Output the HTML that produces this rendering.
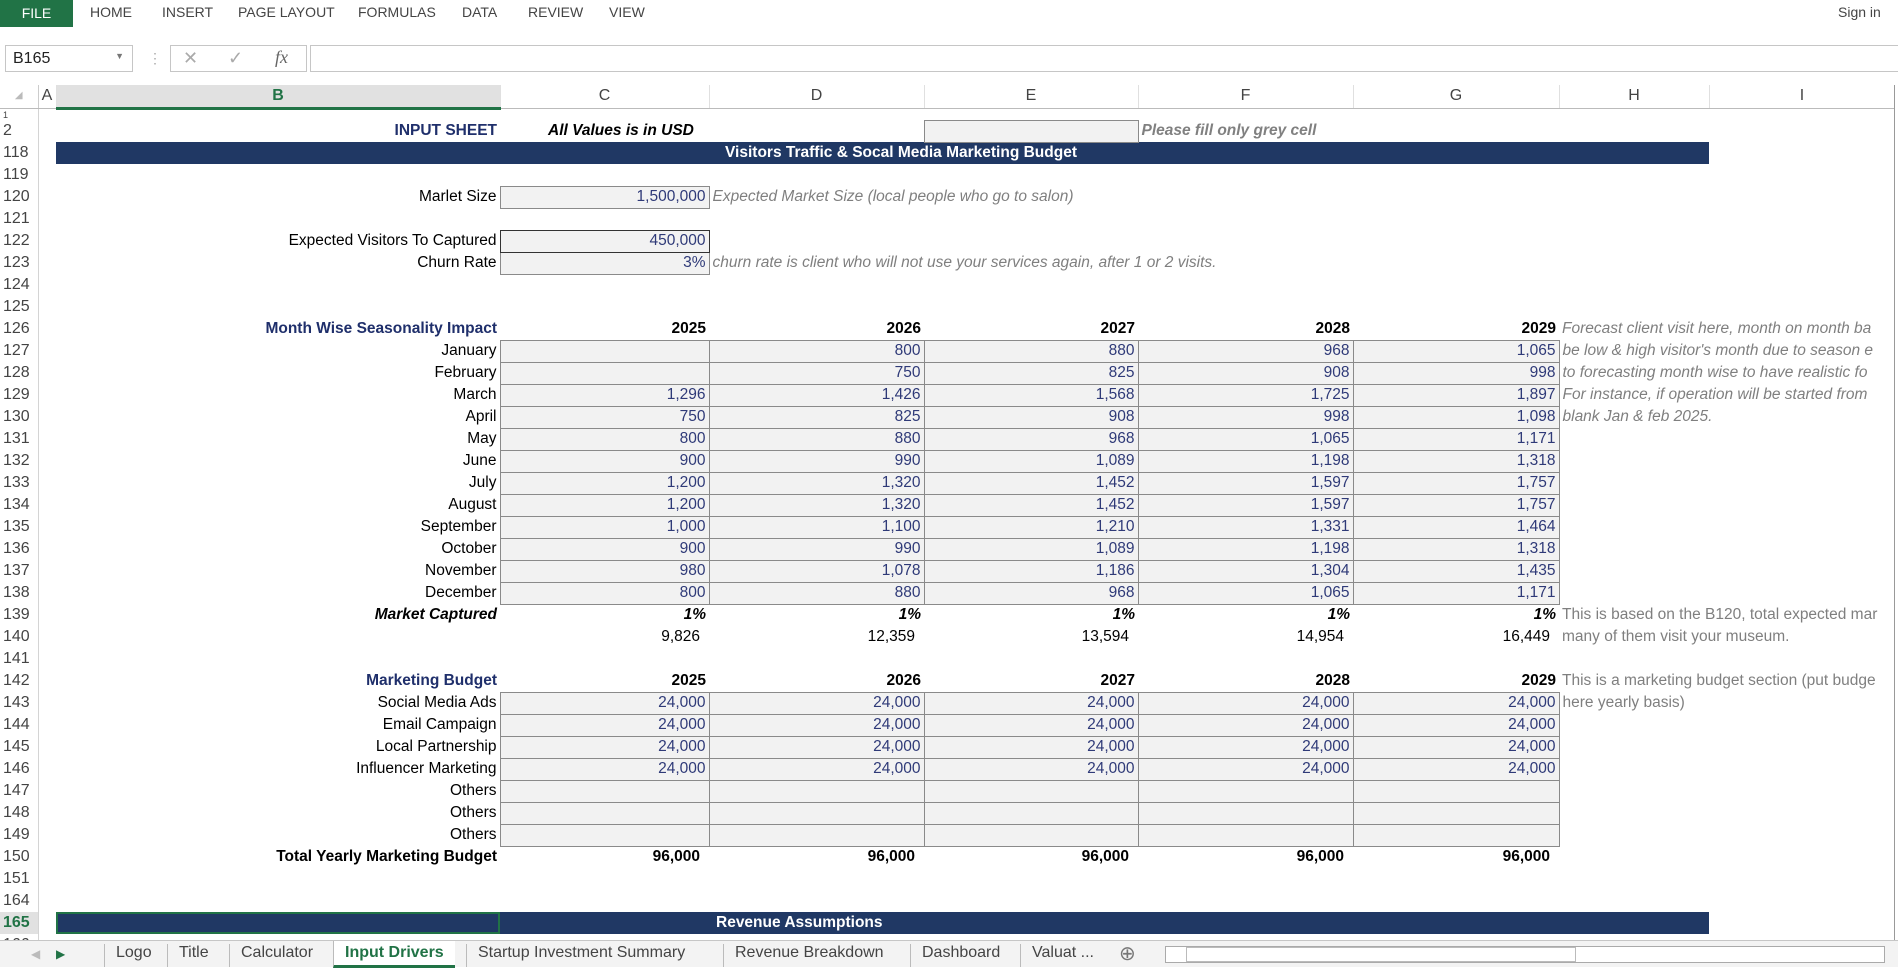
<!DOCTYPE html>
<html><head><meta charset="utf-8"><style>
*{margin:0;padding:0;box-sizing:border-box}
body{width:1898px;height:967px;overflow:hidden;background:#fff;font-family:"Liberation Sans Narrow","Liberation Sans",sans-serif;position:relative}
.menu{position:absolute;top:0;left:0;width:1898px;height:29px;font-family:"Liberation Sans",sans-serif;font-size:14px;color:#444}
.menu span{position:absolute;top:4px}
.file{position:absolute;left:0;top:0;width:73px;height:27px;background:#217346;color:#fff;text-align:center;line-height:26px;font-size:14px}
.nb{position:absolute;left:5px;top:45px;width:128px;height:27px;border:1px solid #c6c6c6;font:16px "Liberation Sans",sans-serif;padding:4px 0 0 7px;color:#222}
.fxb{position:absolute;left:170px;top:45px;width:137px;height:27px;border:1px solid #c6c6c6;color:#aaa;font-size:18px}
.fin{position:absolute;left:310px;top:45px;width:1590px;height:27px;border:1px solid #c6c6c6;border-right:none}
.grid{position:absolute;left:0;top:85px;width:1895px;height:855px;overflow:hidden;border-right:1px solid #999}
table{border-collapse:collapse;table-layout:fixed;width:1895px}
tr{height:22px}
td{height:22px;padding:0 3px;white-space:nowrap;font-size:15.5px;color:#000;overflow:visible;line-height:20px}
.rh{font-family:"Liberation Sans",sans-serif;font-size:16px;color:#444;padding:0 0 0 3px;border-right:1px solid #d4d4d4}
.ch td{height:23px;text-align:center;font-family:"Liberation Sans",sans-serif;font-size:16px;color:#444;border-right:1px solid #e0e0e0;border-bottom:1px solid #bbb}
.r{text-align:right}
.g{background:#f2f2f2;border:1px solid #8a8a8a;text-align:right;color:#2f3a78}
.b{font-weight:bold}
.nv{color:#1f2f6b;font-weight:bold;text-align:right}
.nt{color:#7f7f7f;font-style:italic}
.band{background:#203864;color:#fff;font-weight:bold;text-align:center}
.tabs{position:absolute;left:0;top:940px;width:1898px;height:27px;background:#f3f3f3;border-top:1px solid #c6c6c6;font-family:"Liberation Sans",sans-serif;font-size:16px;color:#444}
.tabs span{position:absolute;top:3px;padding:0 11px;border-left:1px solid #bbb;height:23px}
</style></head><body>
<div class="menu"><div class="file">FILE</div>
<span style="left:90px">HOME</span><span style="left:162px">INSERT</span><span style="left:238px">PAGE LAYOUT</span><span style="left:358px">FORMULAS</span><span style="left:462px">DATA</span><span style="left:528px">REVIEW</span><span style="left:609px">VIEW</span><span style="left:1838px">Sign in</span></div>
<div class="nb">B165<span style="position:absolute;right:8px;top:5px;font-size:9px;color:#777">▼</span></div>
<div style="position:absolute;left:148px;top:50px;color:#aaa;font-size:14px">⋮</div>
<div class="fxb"><span style="position:absolute;left:12px;top:2px">✕</span><span style="position:absolute;left:57px;top:2px">✓</span><span style="position:absolute;left:104px;top:1px;font-family:'Liberation Serif',serif;font-style:italic;color:#666">fx</span></div>
<div class="fin"></div>
<div class="grid"><table>
<colgroup><col style="width:38px"><col style="width:18px"><col style="width:444px"><col style="width:209px"><col style="width:215px"><col style="width:214px"><col style="width:215px"><col style="width:206px"><col style="width:150px"><col style="width:186px"></colgroup>
<tr class="ch" style="height:23px"><td style="border-right:1px solid #ccc;font-size:10px;color:#bbb">◢</td><td>A</td><td style="background:#e1e1e1;color:#217346;font-weight:bold;border-bottom:3px solid #217346">B</td><td>C</td><td>D</td><td>E</td><td>F</td><td>G</td><td>H</td><td>I</td></tr>
<tr style="height:12px"><td class="rh" style="height:12px;font-size:9px;line-height:9px;vertical-align:bottom">1</td><td colspan="9" style="height:12px;line-height:9px"></td></tr>
<tr><td class="rh">2</td><td></td><td class="nv">INPUT SHEET</td><td class="b" style="font-style:italic;padding-left:48px">All Values is in USD</td><td></td><td class="g"></td><td class="b nt" style="color:#808080">Please fill only grey cell</td><td></td><td></td><td></td></tr>
<tr><td class="rh">118</td><td></td><td colspan="7" class="band" style="padding-left:40px">Visitors Traffic &amp; Socal Media Marketing Budget</td><td></td></tr>
<tr><td class="rh">119</td><td colspan="9"></td></tr>
<tr><td class="rh">120</td><td></td><td class="r">Marlet Size</td><td class="g">1,500,000</td><td class="nt">Expected Market Size (local people who go to salon)</td><td></td><td></td><td></td><td></td><td></td></tr>
<tr><td class="rh">121</td><td colspan="9"></td></tr>
<tr><td class="rh">122</td><td></td><td class="r">Expected Visitors To Captured</td><td class="g" style="border-color:#333">450,000</td><td></td><td></td><td></td><td></td><td></td><td></td></tr>
<tr><td class="rh">123</td><td></td><td class="r">Churn Rate</td><td class="g">3%</td><td class="nt">churn rate is client who will not use your services again, after 1 or 2 visits.</td><td></td><td></td><td></td><td></td><td></td></tr>
<tr><td class="rh">124</td><td colspan="9"></td></tr>
<tr><td class="rh">125</td><td colspan="9"></td></tr>
<tr><td class="rh">126</td><td></td><td class="nv">Month Wise Seasonality Impact</td><td class="r b">2025</td><td class="r b">2026</td><td class="r b">2027</td><td class="r b">2028</td><td class="r b">2029</td><td class="nt">Forecast client visit here, month on month ba</td><td></td></tr>
<tr><td class="rh">127</td><td></td><td class="r">January</td><td class="g"></td><td class="g">800</td><td class="g">880</td><td class="g">968</td><td class="g">1,065</td><td class="nt">be low &amp; high visitor's month due to season e</td><td></td></tr>
<tr><td class="rh">128</td><td></td><td class="r">February</td><td class="g"></td><td class="g">750</td><td class="g">825</td><td class="g">908</td><td class="g">998</td><td class="nt">to forecasting month wise to have realistic fo</td><td></td></tr>
<tr><td class="rh">129</td><td></td><td class="r">March</td><td class="g">1,296</td><td class="g">1,426</td><td class="g">1,568</td><td class="g">1,725</td><td class="g">1,897</td><td class="nt">For instance, if operation will be started from</td><td></td></tr>
<tr><td class="rh">130</td><td></td><td class="r">April</td><td class="g">750</td><td class="g">825</td><td class="g">908</td><td class="g">998</td><td class="g">1,098</td><td class="nt">blank Jan &amp; feb 2025.</td><td></td></tr>
<tr><td class="rh">131</td><td></td><td class="r">May</td><td class="g">800</td><td class="g">880</td><td class="g">968</td><td class="g">1,065</td><td class="g">1,171</td><td></td><td></td></tr>
<tr><td class="rh">132</td><td></td><td class="r">June</td><td class="g">900</td><td class="g">990</td><td class="g">1,089</td><td class="g">1,198</td><td class="g">1,318</td><td></td><td></td></tr>
<tr><td class="rh">133</td><td></td><td class="r">July</td><td class="g">1,200</td><td class="g">1,320</td><td class="g">1,452</td><td class="g">1,597</td><td class="g">1,757</td><td></td><td></td></tr>
<tr><td class="rh">134</td><td></td><td class="r">August</td><td class="g">1,200</td><td class="g">1,320</td><td class="g">1,452</td><td class="g">1,597</td><td class="g">1,757</td><td></td><td></td></tr>
<tr><td class="rh">135</td><td></td><td class="r">September</td><td class="g">1,000</td><td class="g">1,100</td><td class="g">1,210</td><td class="g">1,331</td><td class="g">1,464</td><td></td><td></td></tr>
<tr><td class="rh">136</td><td></td><td class="r">October</td><td class="g">900</td><td class="g">990</td><td class="g">1,089</td><td class="g">1,198</td><td class="g">1,318</td><td></td><td></td></tr>
<tr><td class="rh">137</td><td></td><td class="r">November</td><td class="g">980</td><td class="g">1,078</td><td class="g">1,186</td><td class="g">1,304</td><td class="g">1,435</td><td></td><td></td></tr>
<tr><td class="rh">138</td><td></td><td class="r">December</td><td class="g">800</td><td class="g">880</td><td class="g">968</td><td class="g">1,065</td><td class="g">1,171</td><td></td><td></td></tr>
<tr><td class="rh">139</td><td></td><td class="r b" style="font-style:italic">Market Captured</td><td class="r b" style="font-style:italic">1%</td><td class="r b" style="font-style:italic">1%</td><td class="r b" style="font-style:italic">1%</td><td class="r b" style="font-style:italic">1%</td><td class="r b" style="font-style:italic">1%</td><td class="nt" style="font-style:normal">This is based on the B120, total expected mar</td><td></td></tr>
<tr><td class="rh">140</td><td></td><td></td><td class="r" style="padding-right:9px">9,826</td><td class="r" style="padding-right:9px">12,359</td><td class="r" style="padding-right:9px">13,594</td><td class="r" style="padding-right:9px">14,954</td><td class="r" style="padding-right:9px">16,449</td><td class="nt" style="font-style:normal">many of them visit your museum.</td><td></td></tr>
<tr><td class="rh">141</td><td colspan="9"></td></tr>
<tr><td class="rh">142</td><td></td><td class="nv">Marketing Budget</td><td class="r b">2025</td><td class="r b">2026</td><td class="r b">2027</td><td class="r b">2028</td><td class="r b">2029</td><td class="nt" style="font-style:normal">This is a marketing budget section (put budge</td><td></td></tr>
<tr><td class="rh">143</td><td></td><td class="r">Social Media Ads</td><td class="g">24,000</td><td class="g">24,000</td><td class="g">24,000</td><td class="g">24,000</td><td class="g">24,000</td><td class="nt" style="font-style:normal">here yearly basis)</td><td></td></tr>
<tr><td class="rh">144</td><td></td><td class="r">Email Campaign</td><td class="g">24,000</td><td class="g">24,000</td><td class="g">24,000</td><td class="g">24,000</td><td class="g">24,000</td><td></td><td></td></tr>
<tr><td class="rh">145</td><td></td><td class="r">Local Partnership</td><td class="g">24,000</td><td class="g">24,000</td><td class="g">24,000</td><td class="g">24,000</td><td class="g">24,000</td><td></td><td></td></tr>
<tr><td class="rh">146</td><td></td><td class="r">Influencer Marketing</td><td class="g">24,000</td><td class="g">24,000</td><td class="g">24,000</td><td class="g">24,000</td><td class="g">24,000</td><td></td><td></td></tr>
<tr><td class="rh">147</td><td></td><td class="r">Others</td><td class="g"></td><td class="g"></td><td class="g"></td><td class="g"></td><td class="g"></td><td></td><td></td></tr>
<tr><td class="rh">148</td><td></td><td class="r">Others</td><td class="g"></td><td class="g"></td><td class="g"></td><td class="g"></td><td class="g"></td><td></td><td></td></tr>
<tr><td class="rh">149</td><td></td><td class="r">Others</td><td class="g"></td><td class="g"></td><td class="g"></td><td class="g"></td><td class="g"></td><td></td><td></td></tr>
<tr><td class="rh">150</td><td></td><td class="r b">Total Yearly Marketing Budget</td><td class="r b" style="padding-right:9px">96,000</td><td class="r b" style="padding-right:9px">96,000</td><td class="r b" style="padding-right:9px">96,000</td><td class="r b" style="padding-right:9px">96,000</td><td class="r b" style="padding-right:9px">96,000</td><td></td><td></td></tr>
<tr><td class="rh">151</td><td colspan="9"></td></tr>
<tr><td class="rh">164</td><td colspan="9"></td></tr>
<tr><td class="rh" style="background:#e1e1e1;color:#217346;font-weight:bold">165</td><td></td><td class="band" style="outline:2px solid #217346;outline-offset:-2px"></td><td colspan="6" class="band" style="text-align:left;padding-left:216px">Revenue Assumptions</td><td></td></tr>
<tr><td class="rh">166</td><td colspan="9"></td></tr>
</table></div>
<div class="tabs">
<span style="left:20px;border:none;color:#bbb;font-size:12px;top:6px">◀</span><span style="left:45px;border:none;color:#217346;font-size:12px;top:6px">▶</span>
<span style="left:104px">Logo</span><span style="left:167px">Title</span><span style="left:229px">Calculator</span>
<span style="left:333px;background:#fff;color:#217346;font-weight:bold;top:0;height:27px;padding-top:3px;border-bottom:3px solid #217346">Input Drivers</span>
<span style="left:466px">Startup Investment Summary</span><span style="left:723px">Revenue Breakdown</span><span style="left:910px">Dashboard</span><span style="left:1020px">Valuat ...</span>
<span style="left:1108px;border:none;font-size:20px;top:0;color:#777">⊕</span>
<div style="position:absolute;left:1165px;top:5px;width:720px;height:17px;border:1px solid #aaa;background:#fff"><div style="position:absolute;left:20px;top:0;width:390px;height:15px;border:1px solid #bbb;background:#fff"></div></div>
</div>
</body></html>
